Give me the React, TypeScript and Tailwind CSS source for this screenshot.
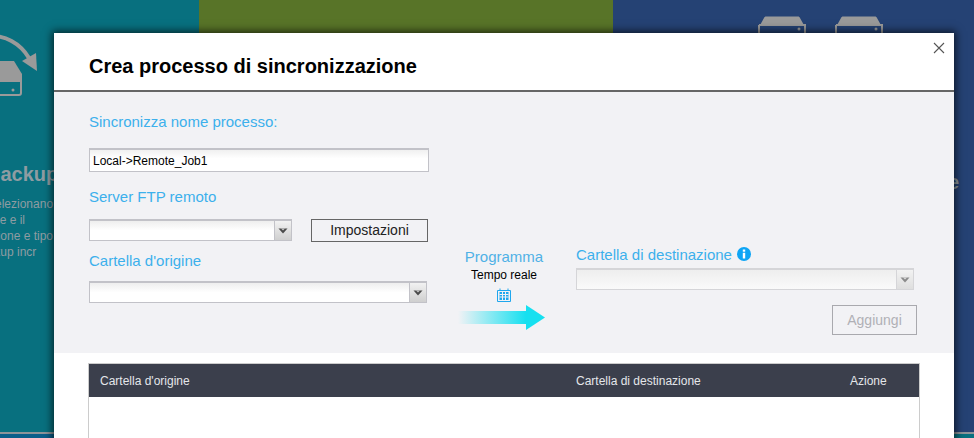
import React from "react";

function Chevron({ muted }: { muted?: boolean }) {
  return (
    <svg width="10" height="6" viewBox="0 0 10 6" className="block">
      <path d="M0.5 0.5H9.5L5 5.5Z" fill={muted ? "#8a8a8a" : "#4a4a4a"} />
      <path d="M3 0.5H7L5 2.5Z" fill={muted ? "#dcdcdc" : "#c8c8c8"} />
    </svg>
  );
}

function Select({ className, muted }: { className: string; muted?: boolean }) {
  return (
    <div
      className={`flex h-[22px] border-2 border-t-2 ${
        muted ? "border-[#d5d5d8] bg-[#fafafa]" : "border-[#c2c2c8] bg-white"
      } ${className}`}
      style={{ borderWidth: 1, borderTopWidth: 2 }}
    >
      <div className={`flex-1 bg-gradient-to-b ${muted ? "from-[#eeeeee] to-[#fafafa]" : "from-[#eeeeee] to-white to-50%"}`} />
      <div
        className={`flex w-[17px] items-center justify-center border-l bg-gradient-to-b ${
          muted ? "border-[#d5d5d8] from-[#f2f2f2] to-[#dedede]" : "border-[#c2c2c8] from-[#f2f2f2] to-[#cfcfcf]"
        }`}
      >
        <Chevron muted={muted} />
      </div>
    </div>
  );
}

function Label({ children, className = "" }: { children: React.ReactNode; className?: string }) {
  return <div className={`text-[15px] leading-[18px] text-[#3cb0ec] ${className}`}>{children}</div>;
}

function ServerStack() {
  return (
    <svg width="40" height="74" viewBox="0 0 40 74" className="block" fill="none">
      <path d="M-12 12C5 11 20 19 29 34" stroke="#9a9a9a" strokeWidth="4" />
      <path d="M37 47L22 37L36 29Z" fill="#9a9a9a" />
      <path d="M-10 50L-2 37H14L22 50V58H-10Z" fill="#9a9a9a" />
      <rect x="-10" y="50" width="31" height="21" rx="2" stroke="#9a9a9a" strokeWidth="2" />
      <circle cx="13" cy="66" r="1.5" fill="#9a9a9a" />
    </svg>
  );
}

function Drive() {
  return (
    <svg width="48" height="20" viewBox="0 0 48 20" className="block" fill="none">
      <path d="M1 11L6 2C6.5 1 7 0.500 8 0.500H40C41 0.500 41.500 1 42 2L47 11V9H1Z" fill="#9a9a9a" />
      <path d="M1 9H47V20" stroke="#9a9a9a" strokeWidth="2" />
      <path d="M1 9V20" stroke="#9a9a9a" strokeWidth="2" />
      <circle cx="41" cy="13" r="1.500" fill="#9a9a9a" />
    </svg>
  );
}

export default function App() {
  return (
    <div className="relative h-[438px] w-[974px] overflow-hidden font-['Liberation_Sans',Arial,sans-serif]">
      <div className="flex h-[432px]">
        <div className="w-[199px] overflow-hidden bg-[#08707f] text-[#8f9ca2]">
          <div className="h-[24px]" />
          <ServerStack />
          <div className="h-[64px]" />
          <div className="text-[20px] leading-[24px] font-bold -ml-[14px]">Backup</div>
          <div className="mt-[10px] -ml-[25px] text-[12px] leading-[16px] whitespace-nowrap">
            <div>Si selezionano</div>
            <div>locale e il</div>
            <div>versione e tipo</div>
            <div>backup incr</div>
          </div>
        </div>
        <div className="w-[414px] bg-[#587428]" />
        <div className="flex-1 overflow-hidden bg-[#254274] text-[#8f9ca2]">
          <div className="flex h-[33px] gap-[29px] pt-[16px] pl-[145px]">
            <Drive />
            <Drive />
          </div>
          <div className="mt-[137px] pl-[335px] text-[20px] leading-[24px] font-bold">e</div>
          <div className="mt-[8px] pl-[315px] text-[12px] leading-[16px] whitespace-nowrap">
            <div>rtell</div>
            <div>ono</div>
          </div>
        </div>
      </div>
      <div className="flex h-[6px] border-t-2 border-[#8d9499]">
        <div className="w-[199px] bg-[#0b5e8a]" />
        <div className="w-[414px] bg-[#0b5e8a]" />
        <div className="flex-1 bg-[#07707f]" />
      </div>

      <div className="absolute top-[33px] left-[54px] h-[420px] w-[900px] bg-white shadow-[0_0_8px_2px_rgba(0,0,0,0.65)]">
        <div className="relative h-[59px] border-b-2 border-[#666666] pt-[21px] pl-[35px]">
          <h1 className="text-[20px] leading-[24px] font-bold text-black">Crea processo di sincronizzazione</h1>
          <svg width="12" height="12" viewBox="0 0 12 12" className="absolute top-[9px] right-[9px]">
            <path d="M1 1L11 11M11 1L1 11" stroke="#555555" strokeWidth="1.100" />
          </svg>
        </div>

        <div className="flex h-[261px] bg-[#f2f2f5] pl-[35px]">
          <div className="w-[340px] pt-[21px]">
            <Label>Sincronizza nome processo:</Label>
            <div className="mt-[17px] flex h-[24px] items-center border border-t-2 border-[#c2c2c8] bg-gradient-to-b from-[#f0f0f0] to-white to-40% px-[3px] text-[12px] text-black">
              Local-&gt;Remote_Job1
            </div>
            <Label className="mt-[16px]">Server FTP remoto</Label>
            <div className="mt-[13px] flex items-start">
              <Select className="w-[203px]" />
              <button className="ml-[19px] h-[23px] w-[117px] border border-[#666666] text-[14px] leading-[19px] text-[#222222]">
                Impostazioni
              </button>
            </div>
            <Label className="mt-[10px]">Cartella d'origine</Label>
            <Select className="mt-[11px] w-[338px]" />
          </div>

          <div className="flex w-[147px] flex-col items-center pt-[156px] pl-[3px]">
            <div className="text-[15px] leading-[18px] text-[#4fb1e6]">Programma</div>
            <div className="mt-[2px] text-[12px] leading-[15px] text-black">Tempo reale</div>
            <svg width="14" height="14" viewBox="0 0 14 14" className="mt-[5px] block" fill="none">
              <path d="M0.500 2.500H13.500V13.500H0.500Z" stroke="#1ea7ee" />
              <path d="M3 0.500V3M11 0.500V3" stroke="#1ea7ee" />
              <path d="M2.500 4H11.500V12H2.500Z" fill="#1ea7ee" />
              <path d="M5.500 4V12M8.500 4V12M2.500 6.500H11.500M2.500 9H11.500" stroke="#f2f2f5" />
            </svg>
            <div className="-ml-[6px] mt-[3px] flex items-center">
              <div className="h-[13px] w-[68px] bg-gradient-to-r from-transparent to-[#16e0f0]" />
              <svg width="19" height="25" viewBox="0 0 19 25" className="block">
                <path d="M0 0L19 12.500L0 25Z" fill="#16e0f0" />
              </svg>
            </div>
          </div>

          <div className="w-[341px] pt-[154px]">
            <Label className="flex items-center">
              Cartella di destinazione
              <svg width="14" height="14" viewBox="0 0 14 14" className="ml-[5px] -translate-y-[1px]">
                <circle cx="7" cy="7" r="7" fill="#0ea5f5" />
                <rect x="5.800" y="2.500" width="2.400" height="2.200" fill="#ffffff" />
                <rect x="5.800" y="5.800" width="2.400" height="5.700" fill="#ffffff" />
              </svg>
            </Label>
            <Select muted className="mt-[4px] w-[338px]" />
            <div className="mt-[15px] flex justify-end">
              <button className="h-[30px] w-[85px] border border-[#a9a9ae] text-[14px] text-[#b0b0b5]">Aggiungi</button>
            </div>
          </div>
        </div>

        <div className="px-[34px] pt-[10px]">
          <div className="h-[100px] border border-[#cccccc]">
            <div className="flex h-[33px] items-center bg-[#3b3f4c] pl-[11px] text-[12px] text-[#e4e6ea]">
              <div className="w-[476px]">Cartella d'origine</div>
              <div className="w-[274px]">Cartella di destinazione</div>
              <div>Azione</div>
            </div>
          </div>
        </div>
      </div>
    </div>
  );
}
